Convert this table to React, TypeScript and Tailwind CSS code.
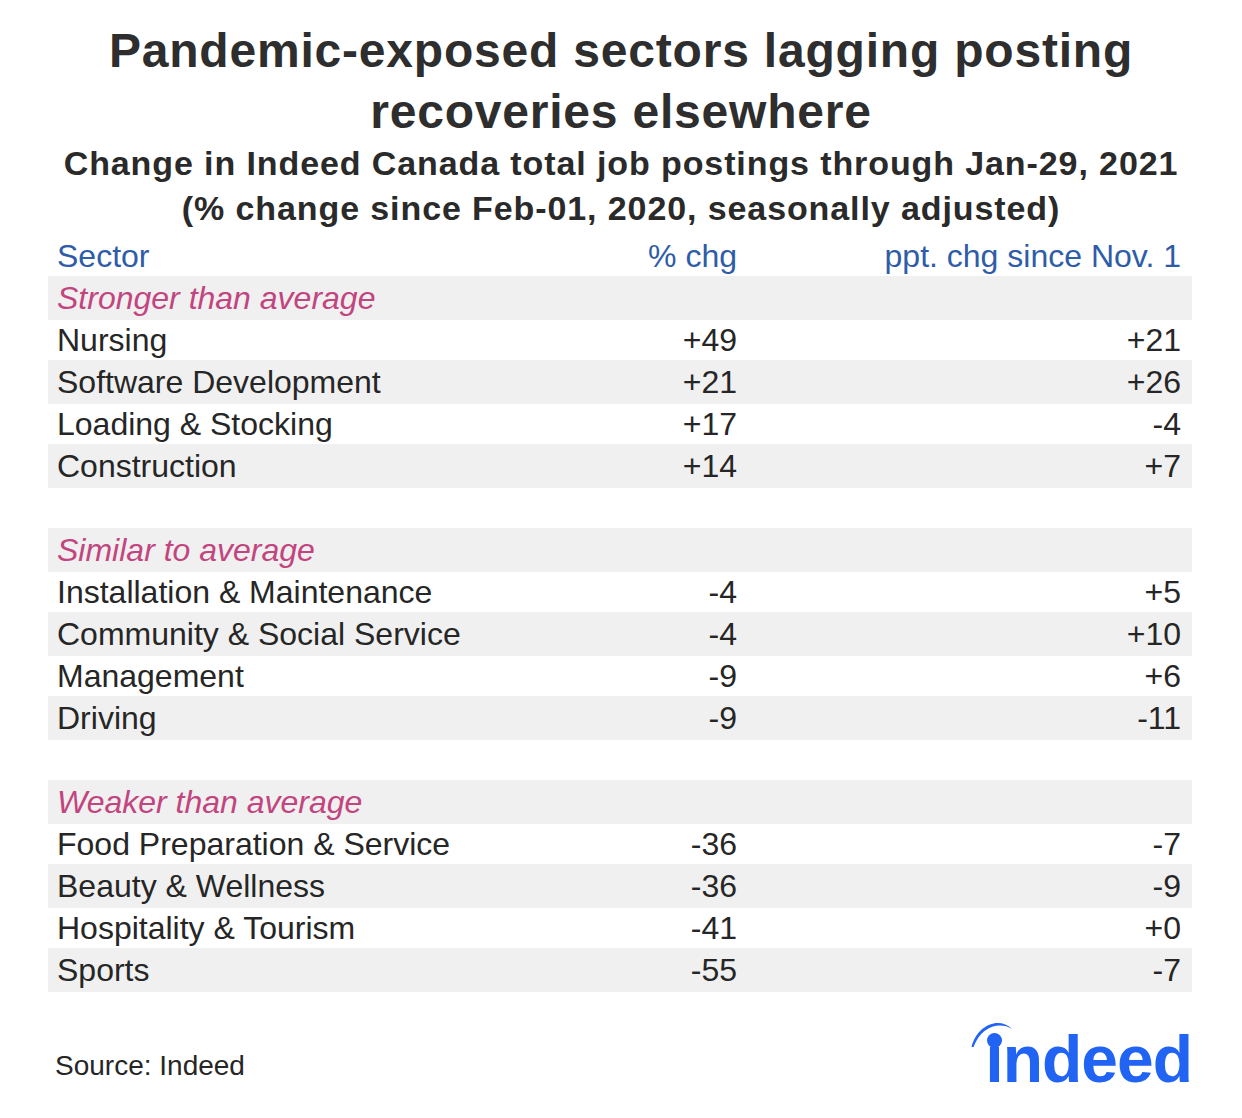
const groups = [
  {
    label: "Stronger than average",
    rows: [
      ["Nursing", "+49", "+21"],
      ["Software Development", "+21", "+26"],
      ["Loading & Stocking", "+17", "-4"],
      ["Construction", "+14", "+7"],
    ],
  },
  {
    label: "Similar to average",
    rows: [
      ["Installation & Maintenance", "-4", "+5"],
      ["Community & Social Service", "-4", "+10"],
      ["Management", "-9", "+6"],
      ["Driving", "-9", "-11"],
    ],
  },
  {
    label: "Weaker than average",
    rows: [
      ["Food Preparation & Service", "-36", "-7"],
      ["Beauty & Wellness", "-36", "-9"],
      ["Hospitality & Tourism", "-41", "+0"],
      ["Sports", "-55", "-7"],
    ],
  },
]

function Row({ cells, shaded }: { cells: string[]; shaded: boolean }) {
  return (
    <div
      className={
        shaded
          ? "flex h-[44px] items-center bg-[#f0f0f0] pl-[9px] pr-[11px] text-[32px] leading-[40px]"
          : "flex h-[40px] items-center pl-[9px] pr-[11px] text-[32px] leading-[40px]"
      }
    >
      <div className="flex-1">{cells[0]}</div>
      <div className="text-right">{cells[1]}</div>
      <div className="w-[444px] text-right">{cells[2]}</div>
    </div>
  )
}

function Logo() {
  return (
    <div className="relative mr-[50px] ml-auto mt-[34px] text-[66px] font-bold leading-[66px] tracking-[-1px] text-[#2164f3]">
      ındeed
      <svg
        className="absolute left-[-21px] top-[-11px]"
        width="60"
        height="50"
        viewBox="960 1015 60 50"
      >
        <path
          d="M967.5,1047 C973,1025 995,1016 1008,1029 C995,1021 977,1027 969.5,1047 Z"
          fill="#2164f3"
        />
        <circle cx="990.5" cy="1040.5" r="7.5" fill="#2164f3" />
      </svg>
    </div>
  )
}

export default function App() {
  return (
    <div className="h-[1118px] w-[1242px] bg-white font-['Liberation_Sans',Arial,sans-serif] text-[#262626]">
      <h1 className="pt-[20px] text-center text-[48px] font-bold leading-[61px] tracking-[0.8px] text-[#2e2e2e]">
        Pandemic-exposed sectors lagging posting
        <br />
        recoveries elsewhere
      </h1>
      <div className="-mt-[1px] text-center text-[34px] font-bold leading-[45px] tracking-[0.9px] text-[#2a2a2a]">
        Change in Indeed Canada total job postings through Jan-29, 2021
        <br />
        (% change since Feb-01, 2020, seasonally adjusted)
      </div>

      <div className="ml-[48px] mt-[5px] w-[1144px]">
        <div className="flex h-[40px] items-center pl-[9px] pr-[11px] text-[32px] leading-[40px] text-[#2f5ca8]">
          <div className="flex-1">Sector</div>
          <div className="text-right">% chg</div>
          <div className="w-[444px] text-right">ppt. chg since Nov. 1</div>
        </div>

        {groups.map((g, gi) => (
          <div key={g.label}>
            {gi > 0 && <div className="h-[40px]" />}
            <div className="flex h-[44px] items-center bg-[#f0f0f0] pl-[9px] text-[32px] italic leading-[40px] text-[#c2457f]">
              {g.label}
            </div>
            {g.rows.map((r, i) => (
              <Row key={r[0]} cells={r} shaded={i % 2 === 1} />
            ))}
          </div>
        ))}
      </div>

      <div className="flex items-start">
        <div className="ml-[55px] mt-[58px] text-[28px] leading-[32px]">Source: Indeed</div>
        <Logo />
      </div>
    </div>
  )
}
